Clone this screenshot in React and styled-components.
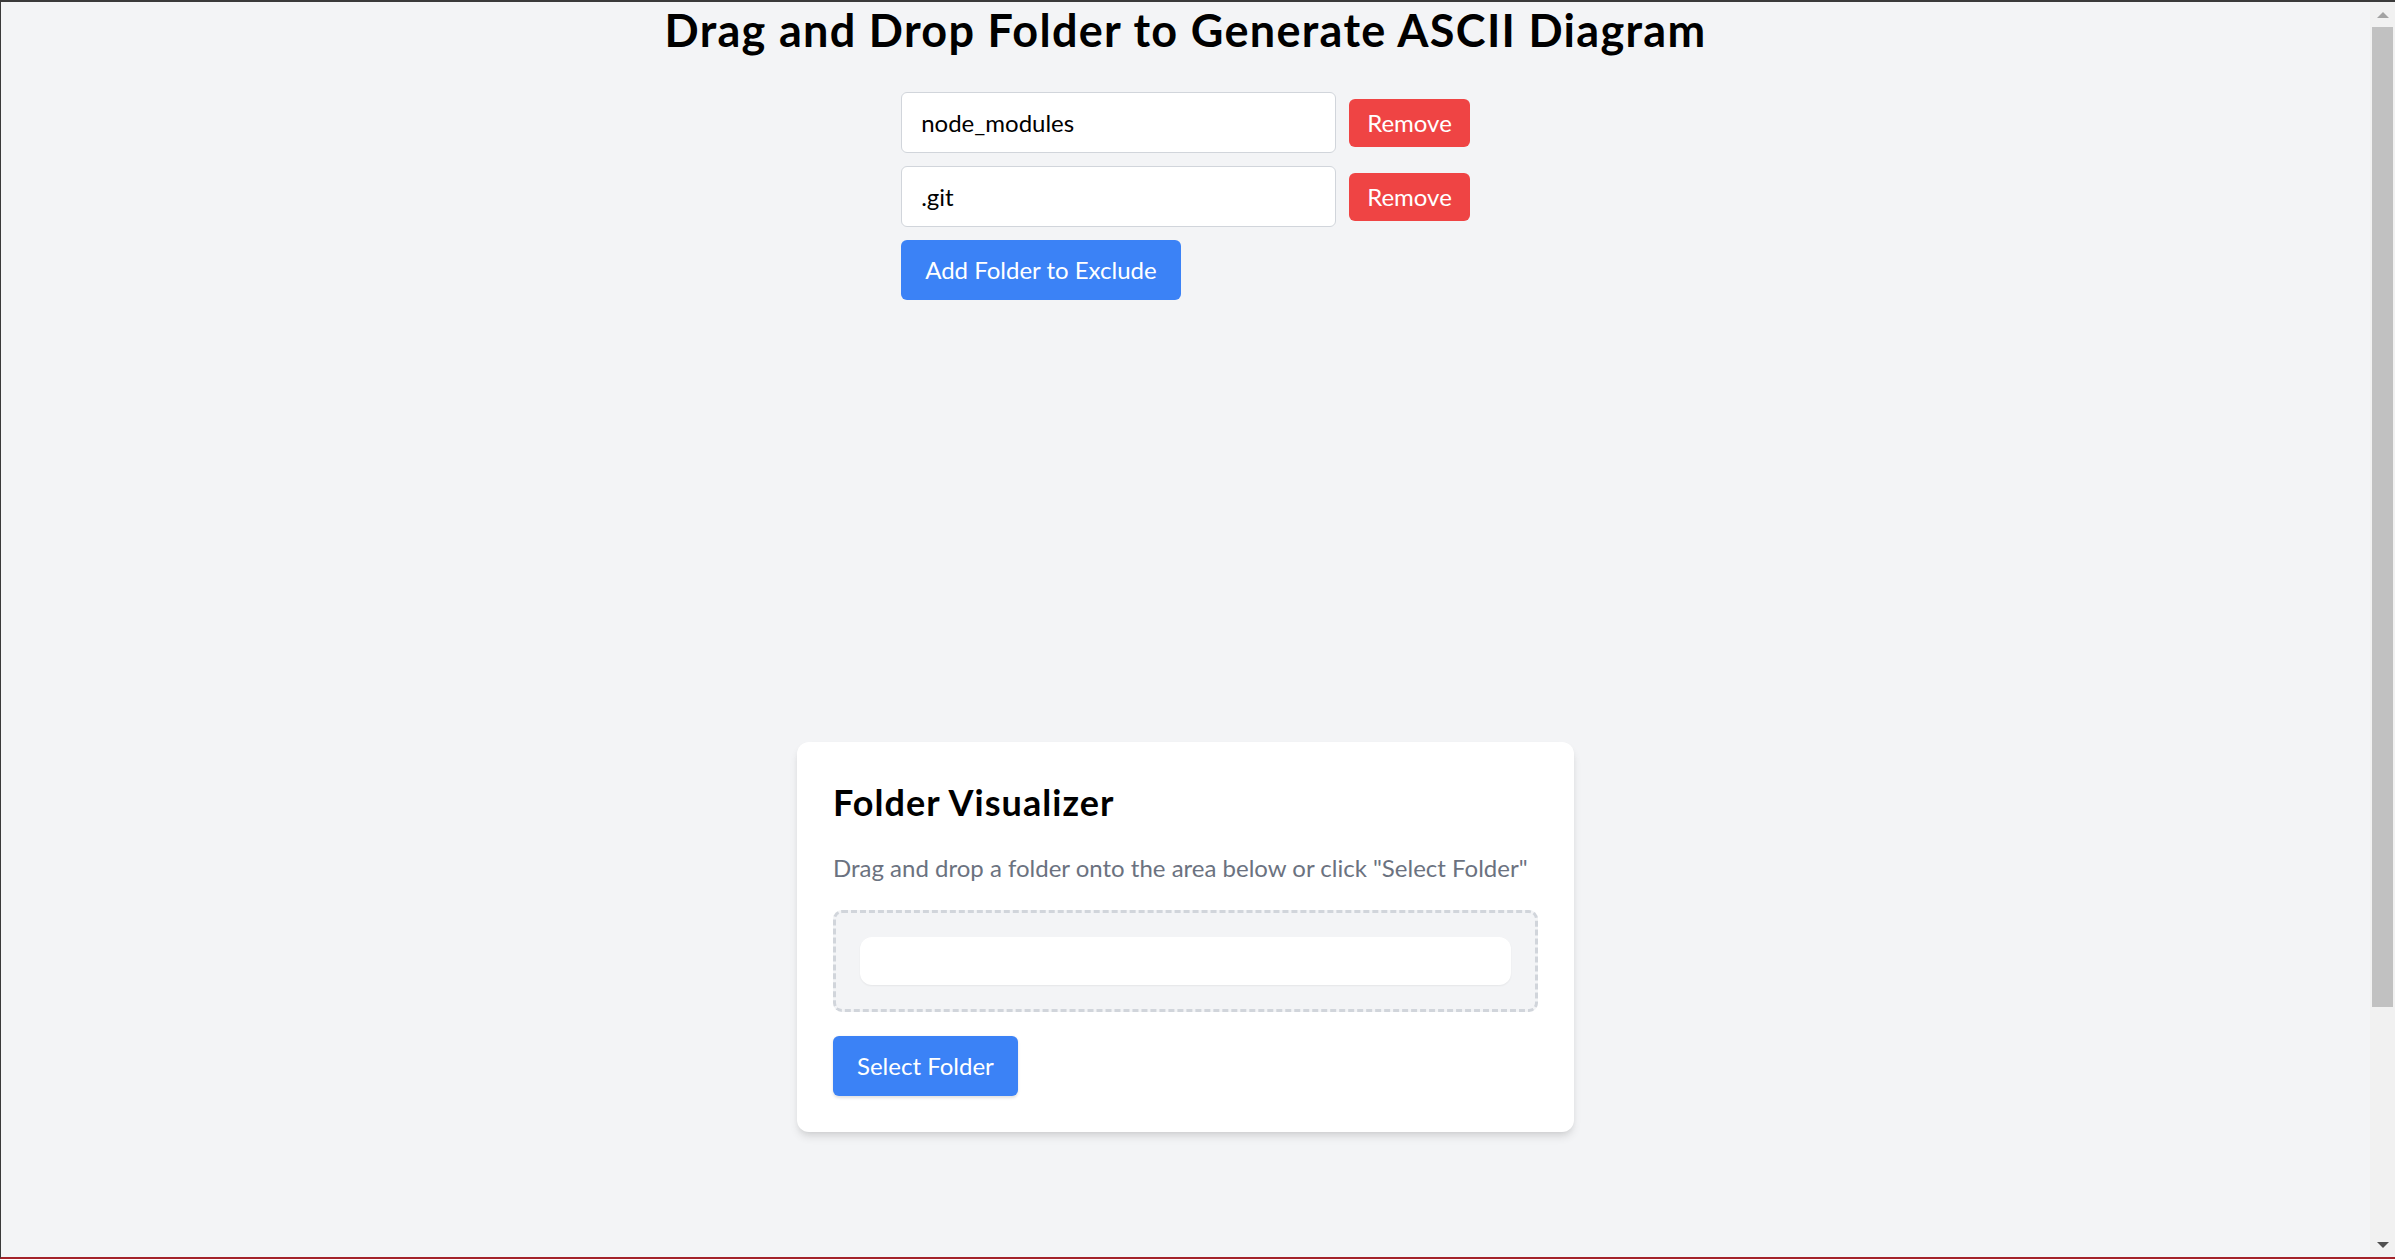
import React, { useState } from 'react';
import styled, { createGlobalStyle } from 'styled-components';

const colors = {
  page: '#f3f4f6',
  border: '#d1d5db',
  blue: '#3b82f6',
  red: '#ef4444',
  muted: '#6b7280',
  ink: '#000000',
  track: '#f1f1f1',
  thumb: '#c1c1c1',
};

const GlobalStyle = createGlobalStyle`
  html, body {
    margin: 0;
    height: 100%;
    overflow: hidden;
    background: ${colors.page};
    font-family: "Segoe UI", Lato, "Liberation Sans", sans-serif;
  }
  * {
    box-sizing: border-box;
  }
`;

const Frame = styled.div`
  height: 100vh;
  display: flex;
  border-top: 2px solid #3a3a3a;
  border-left: 1px solid #3a3a3a;
  border-bottom: 2px solid #a3222a;
  background: ${colors.page};
`;

const Viewport = styled.main`
  flex: 1;
  min-width: 0;
  overflow: hidden;
`;

// window scrollbar, drawn since the headless browser hides real ones
const ScrollBar = styled.div`
  width: 25px;
  flex: none;
  display: flex;
  flex-direction: column;
  background: ${colors.track};
`;

const ArrowButton = styled.div`
  height: 25px;
  flex: none;
  display: flex;
  align-items: center;
  justify-content: center;
  padding-top: ${(p) => (p.$down ? '0' : '1px')};

  &::after {
    content: '';
    border-left: 6px solid transparent;
    border-right: 6px solid transparent;
    ${(p) =>
      p.$down
        ? 'border-top: 6px solid #505050;'
        : 'border-bottom: 6px solid #a3a3a3;'}
  }
`;

const Rail = styled.div`
  flex: 1;
  padding: 0 2px;
`;

const Thumb = styled.div`
  height: 980px;
  background: ${colors.thumb};
`;

const Title = styled.h1`
  margin: 0 0 36px;
  padding-top: 1px;
  text-align: center;
  font-size: 45px;
  line-height: 54px;
  font-weight: 700;
  letter-spacing: 1.3px;
  color: ${colors.ink};
`;

const ExcludeList = styled.div`
  width: fit-content;
  margin: -1px auto 12px;
  display: flex;
  flex-direction: column;
  align-items: flex-start;
  gap: 13px;
`;

const ExcludeRow = styled.div`
  display: flex;
  align-items: center;
  gap: 13px;
`;

const FolderInput = styled.input`
  width: 435px;
  height: 61px;
  padding: 0 19px;
  border: 1px solid ${colors.border};
  border-radius: 6px;
  background: #fff;
  font: inherit;
  font-size: 24px;
  color: ${colors.ink};
  outline: none;
`;

const Button = styled.button`
  border: none;
  border-radius: 6px;
  background: ${(p) => (p.$danger ? colors.red : colors.blue)};
  color: #fff;
  font: inherit;
  font-size: 24px;
  line-height: 36px;
  padding: ${(p) => (p.$compact ? '6px 18px' : '12px 24px')};
  box-shadow: ${(p) => (p.$raised ? '0 1.5px 3px rgba(0, 0, 0, 0.12)' : 'none')};
  cursor: pointer;
`;

const Stage = styled.section`
  min-height: calc(100vh - 10px);
  display: flex;
  align-items: center;
  justify-content: center;
`;

const Card = styled.div`
  width: 777px;
  padding: 36px;
  background: #fff;
  border-radius: 12px;
  box-shadow: 0 6px 9px -1.5px rgba(0, 0, 0, 0.1), 0 3px 6px -3px rgba(0, 0, 0, 0.1);
`;

const CardTitle = styled.h2`
  margin: 0 0 24px;
  font-size: 36px;
  line-height: 48px;
  font-weight: 700;
  letter-spacing: 1.05px;
  color: ${colors.ink};
`;

const Hint = styled.p`
  margin: 0 0 24px;
  font-size: 24px;
  line-height: 36px;
  color: ${colors.muted};
`;

const DropZone = styled.div`
  padding: 24px;
  border: 3px dashed ${colors.border};
  border-radius: 9px;
  background: ${colors.page};
  margin-bottom: 24px;
`;

const Tree = styled.pre`
  margin: 0;
  min-height: 48px;
  padding: 24px;
  background: #fff;
  border-radius: 12px;
  box-shadow: 0 1px 2px rgba(0, 0, 0, 0.06);
  font-family: "Liberation Mono", monospace;
  font-size: 21px;
`;

export default function App() {
  const [excluded, setExcluded] = useState(['node_modules', '.git']);
  const [tree] = useState('');

  const update = (i, value) =>
    setExcluded((list) => list.map((item, j) => (j === i ? value : item)));
  const remove = (i) => setExcluded((list) => list.filter((_, j) => j !== i));
  const add = () => setExcluded((list) => [...list, '']);

  return (
    <Frame>
      <GlobalStyle />
      <Viewport>
        <Title>Drag and Drop Folder to Generate ASCII Diagram</Title>
        <ExcludeList>
          {excluded.map((folder, i) => (
            <ExcludeRow key={i}>
              <FolderInput value={folder} onChange={(e) => update(i, e.target.value)} />
              <Button $danger $compact onClick={() => remove(i)}>
                Remove
              </Button>
            </ExcludeRow>
          ))}
          <Button onClick={add}>Add Folder to Exclude</Button>
        </ExcludeList>
        <Stage>
          <Card>
            <CardTitle>Folder Visualizer</CardTitle>
            <Hint>Drag and drop a folder onto the area below or click "Select Folder"</Hint>
            <DropZone>
              <Tree>{tree}</Tree>
            </DropZone>
            <Button $raised>Select Folder</Button>
          </Card>
        </Stage>
      </Viewport>
      <ScrollBar>
        <ArrowButton />
        <Rail>
          <Thumb />
        </Rail>
        <ArrowButton $down />
      </ScrollBar>
    </Frame>
  );
}
